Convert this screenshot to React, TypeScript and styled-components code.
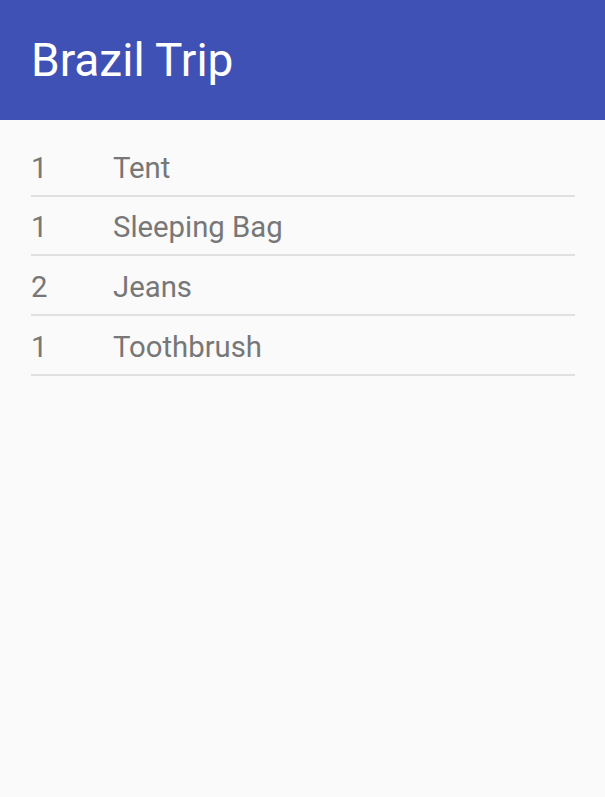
import React from 'react';
import styled, { createGlobalStyle } from 'styled-components';

const GlobalStyle = createGlobalStyle`
  html, body {
    margin: 0;
    padding: 0;
    background-color: #fafafa;
    font-family: Roboto, "Noto Sans", sans-serif;
  }
`;

const Screen = styled.div`
  min-height: 797px;
  background-color: #fafafa;
`;

const Toolbar = styled.header`
  height: 120px;
  padding-left: 31px;
  display: flex;
  align-items: center;
  background-color: #3f51b5;
`;

const Title = styled.h1`
  margin: 0;
  font-size: 46px;
  font-weight: 400;
  line-height: 46px;
  color: #ffffff;
`;

const List = styled.ul`
  list-style: none;
  margin: 0;
  padding: 17px 30px 0 31px;
`;

const Row = styled.li`
  display: flex;
  align-items: center;
  padding: 12.67px 0 9px;
  border-bottom: 2px solid #e0e0e0;
  font-size: 29.3px;
  line-height: 36px;
  color: #777777;
`;

const Quantity = styled.span`
  width: 82px;
  flex-shrink: 0;
`;

const Name = styled.span`
  flex: 1;
`;

interface Item {
  quantity: number;
  name: string;
}

const items: Item[] = [
  { quantity: 1, name: 'Tent' },
  { quantity: 1, name: 'Sleeping Bag' },
  { quantity: 2, name: 'Jeans' },
  { quantity: 1, name: 'Toothbrush' },
];

function App(): React.JSX.Element {
  return (
    <Screen>
      <GlobalStyle />
      <Toolbar>
        <Title>Brazil Trip</Title>
      </Toolbar>
      <List>
        {items.map((item) => (
          <Row key={item.name}>
            <Quantity>{item.quantity}</Quantity>
            <Name>{item.name}</Name>
          </Row>
        ))}
      </List>
    </Screen>
  );
}

export default App;
